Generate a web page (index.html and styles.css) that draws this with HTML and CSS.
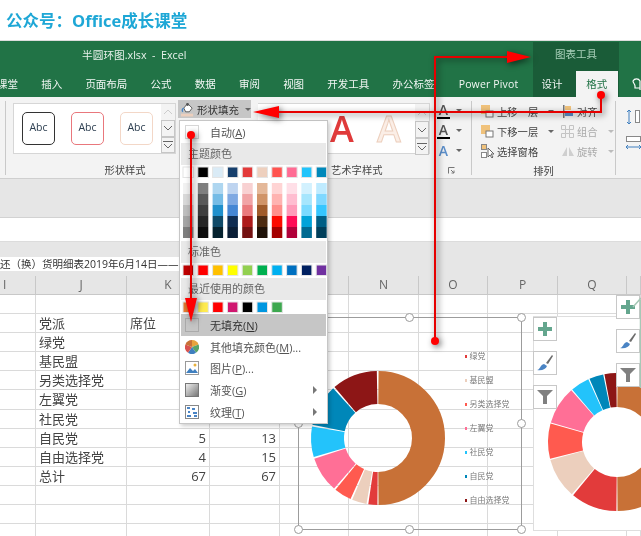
FILE: index.html
```html
<!DOCTYPE html>
<html lang="zh">
<head>
<meta charset="utf-8">
<title>半圆环图.xlsx - Excel</title>
<link rel="stylesheet" href="styles.css">
</head>
<body>
<div class="page">
  <header class="brand">公众号：Office成长课堂</header>

  <section class="green">
    <div class="chart-tools">图表工具</div>
    <div class="doc-title">半圆环图.xlsx&nbsp; -&nbsp; Excel</div>
    <nav class="tabs">
      <span class="tab first">课堂</span><span class="tab">插入</span><span class="tab">页面布局</span><span class="tab">公式</span><span class="tab">数据</span><span class="tab">审阅</span><span class="tab">视图</span><span class="tab">开发工具</span><span class="tab">办公标签</span><span class="tab pivot">Power Pivot</span><span class="tab">设计</span><span class="tab active">格式</span>
      <svg class="bulb" width="9" height="16" viewBox="0 0 9 16"><path d="M8 14V5a4 4 0 0 0-7 0c0 2 2 3 2 5v2h5" fill="none" stroke="#fff" stroke-width="1.2"/></svg>
    </nav>
  </section>

  <section class="ribbon">
    <div class="group g-style">
      <div class="gallery">
        <div class="abc-list">
          <span class="abc a1">Abc</span><span class="abc a2">Abc</span><span class="abc a3">Abc</span>
        </div>
        <div class="scroll">
          <span class="sc faded"><svg width="10" height="6" viewBox="0 0 10 6"><path d="M1 5l4-4 4 4" fill="none" stroke="#ccc"/></svg></span>
          <span class="sc boxed"><svg width="10" height="6" viewBox="0 0 10 6"><path d="M1 1l4 4 4-4" fill="none" stroke="#666"/></svg></span>
          <span class="sc boxed"><svg width="10" height="8" viewBox="0 0 10 8"><path d="M0 .5h10M1 3l4 4 4-4" fill="none" stroke="#666"/></svg></span>
        </div>
      </div>
      <div class="group-label">形状样式</div>
    </div>

    <div class="g-word">
      <div class="fill-btn">
        <svg width="14" height="17" viewBox="0 0 14 17"><rect x="0" y="13" width="13" height="3" fill="#eccfbd"/><path d="M3 7l4-5 5 5-3 4H5z" fill="#fff" stroke="#555"/><path d="M3 7c-2 1-2 3-1 4" fill="none" stroke="#4a84c4" stroke-width="1.5"/><circle cx="7" cy="3" r="1.6" fill="#555"/></svg>
        <span>形状填充</span>
        <i class="caret"></i>
      </div>
      <div class="word-main">
        <div class="word-gallery">
          <span class="big-a red">A</span><span class="big-a peach">A</span>
          <div class="scroll">
            <span class="sc faded"><svg width="10" height="6" viewBox="0 0 10 6"><path d="M1 5l4-4 4 4" fill="none" stroke="#ccc"/></svg></span>
            <span class="sc boxed"><svg width="10" height="6" viewBox="0 0 10 6"><path d="M1 1l4 4 4-4" fill="none" stroke="#666"/></svg></span>
            <span class="sc boxed"><svg width="10" height="8" viewBox="0 0 10 8"><path d="M0 .5h10M1 3l4 4 4-4" fill="none" stroke="#666"/></svg></span>
          </div>
        </div>
        <div class="word-label"><span>艺术字样式</span>
          <svg width="7" height="7" viewBox="0 0 7 7"><path d="M.5 6.5v-6h6M3 3l3 3M6 3.500V6H3.500" fill="none" stroke="#777"/></svg>
        </div>
      </div>
      <div class="text-tools">
        <div class="tt"><span class="small-a under">A</span><i class="caret"></i></div>
        <div class="tt"><span class="small-a under">A</span><i class="caret"></i></div>
        <div class="tt"><span class="small-a blue">A</span><i class="caret"></i></div>
      </div>
    </div>

    <div class="group g-arrange">
      <div class="arrange-grid">
        <div class="ar"><svg width="13" height="13" viewBox="0 0 13 13"><rect x="0" y="0" width="9" height="9" fill="#f0c27b"/><rect x="5" y="6" width="7" height="6" fill="#fff" stroke="#777"/></svg><span>上移一层</span><i class="caret"></i></div>
        <div class="ar"><svg width="13" height="13" viewBox="0 0 13 13"><rect x="2" y="0" width="1.500" height="13" fill="#777"/><rect x="4" y="1" width="6" height="4" fill="#f0c27b"/><rect x="4" y="7" width="8" height="4" fill="#5b8ec9"/></svg><span>对齐</span></div>
        <div class="ar"><svg width="13" height="13" viewBox="0 0 13 13"><rect x="0" y="0" width="9" height="9" fill="#f0c27b"/><rect x="5" y="6" width="7" height="6" fill="#fff" stroke="#777"/></svg><span>下移一层</span><i class="caret"></i></div>
        <div class="ar off"><svg width="13" height="13" viewBox="0 0 13 13"><path d="M.5.500h4v4h-4zM8.500.500h4v4h-4zM.5 8.500h4v4h-4zM8.500 8.500h4v4h-4zM4.500 4.500h4v4h-4z" fill="none" stroke="#c4c4c4"/></svg><span>组合</span><i class="caret"></i></div>
        <div class="ar"><svg width="13" height="14" viewBox="0 0 13 14"><rect x=".5" y=".5" width="5" height="5" fill="#f0c27b" stroke="#888"/><rect x=".5" y="8.500" width="5" height="5" fill="#fff" stroke="#888"/><path d="M7 4v9l2-2 2 3 1-1-2-3h3z" fill="#fff" stroke="#666"/></svg><span>选择窗格</span></div>
        <div class="ar off"><svg width="13" height="13" viewBox="0 0 13 13"><path d="M6 2L1 11h5zM8 2l5 9H8z" fill="#cfcfcf"/></svg><span>旋转</span><i class="caret"></i></div>
      </div>
      <div class="group-label">排列</div>
    </div>

    <div class="g-size">
      <svg width="15" height="14" viewBox="0 0 15 14"><path d="M3 0v14M1 2l2-2 2 2M1 12l2 2 2-2" fill="none" stroke="#3f7fbf"/><rect x="9.500" y=".5" width="4" height="12" fill="#fff" stroke="#888"/></svg>
      <svg width="15" height="14" viewBox="0 0 15 14"><rect x=".5" y=".5" width="14" height="5" fill="#fff" stroke="#888"/><path d="M0 11h15M2 9l-2 2 2 2M13 9l2 2-2 2" fill="none" stroke="#3f7fbf"/></svg>
    </div>
  </section>

  <div class="band"></div>
  <div class="formula"></div>
  <div class="sheet-tabs"><div class="sheet-title">还（换）货明细表2019年6月14日——</div></div>

  <section class="sheet">
    <div class="row head"><span class="left">I</span><span>J</span><span>K</span><span></span><span></span><span>N</span><span>O</span><span>P</span><span>Q</span><span></span></div>
    <div class="row"><span></span><span></span><span></span><span></span><span></span><span></span><span></span><span></span><span></span><span></span></div>
    <div class="row"><span></span><span>党派</span><span>席位</span><span></span><span></span><span></span><span></span><span></span><span></span><span></span></div>
    <div class="row"><span></span><span>绿党</span><span></span><span></span><span></span><span></span><span></span><span></span><span></span><span></span></div>
    <div class="row"><span></span><span>基民盟</span><span></span><span></span><span></span><span></span><span></span><span></span><span></span><span></span></div>
    <div class="row"><span></span><span>另类选择党</span><span></span><span></span><span></span><span></span><span></span><span></span><span></span><span></span></div>
    <div class="row"><span></span><span>左翼党</span><span></span><span></span><span></span><span></span><span></span><span></span><span></span><span></span></div>
    <div class="row"><span></span><span>社民党</span><span></span><span></span><span></span><span></span><span></span><span></span><span></span><span></span></div>
    <div class="row"><span></span><span>自民党</span><span class="num">5</span><span class="num">13</span><span></span><span></span><span></span><span></span><span></span><span></span></div>
    <div class="row"><span></span><span>自由选择党</span><span class="num">4</span><span class="num">15</span><span></span><span></span><span></span><span></span><span></span><span></span></div>
    <div class="row"><span></span><span>总计</span><span class="num">67</span><span class="num">67</span><span></span><span></span><span></span><span></span><span></span><span></span></div>
    <div class="row"><span></span><span></span><span></span><span></span><span></span><span></span><span></span><span></span><span></span><span></span></div>
    <div class="row"><span></span><span></span><span></span><span></span><span></span><span></span><span></span><span></span><span></span><span></span></div>
    <div class="row"><span></span><span></span><span></span><span></span><span></span><span></span><span></span><span></span><span></span><span></span></div>
  </section>

  <!-- first chart: transparent, selected -->
  <div class="chart-one">
    <svg class="donut-one" width="140" height="140" viewBox="-70 -70 140 140">
      <g fill="none" stroke-width="33">
        <circle r="50.500" pathLength="360" stroke="#c87137" stroke-dasharray="179 181" transform="rotate(-89.500)"/>
        <circle r="50.500" pathLength="360" stroke="#e23b3b" stroke-dasharray="7.900 352.100" transform="rotate(90.500)"/>
        <circle r="50.500" pathLength="360" stroke="#eccfbd" stroke-dasharray="12.800 347.200" transform="rotate(99.900)"/>
        <circle r="50.500" pathLength="360" stroke="#ff5a4f" stroke-dasharray="15.300 344.700" transform="rotate(114.200)"/>
        <circle r="50.500" pathLength="360" stroke="#ff6f96" stroke-dasharray="31 329" transform="rotate(131)"/>
        <circle r="50.500" pathLength="360" stroke="#23c3fb" stroke-dasharray="26.500 333.500" transform="rotate(163.500)"/>
        <circle r="50.500" pathLength="360" stroke="#0087b9" stroke-dasharray="36.500 323.500" transform="rotate(191.500)"/>
        <circle r="50.500" pathLength="360" stroke="#8d1616" stroke-dasharray="39.500 320.500" transform="rotate(229.500)"/>
      </g>
    </svg>
    <ul class="legend">
      <li class="l1">绿党</li><li class="l2">基民盟</li><li class="l3">另类选择党</li><li class="l4">左翼党</li><li class="l5">社民党</li><li class="l6">自民党</li><li class="l7">自由选择党</li>
    </ul>
    <i class="handle tl"></i><i class="handle tm"></i><i class="handle tr"></i>
    <i class="handle ml"></i><i class="handle mr"></i>
    <i class="handle bl"></i><i class="handle bm"></i><i class="handle br"></i>
  </div>

  <!-- second chart -->
  <div class="chart-two">
    <svg class="donut-two" width="144" height="144" viewBox="-72 -72 144 144">
      <g fill="none" stroke-width="34">
        <circle r="52" pathLength="360" stroke="#c87137" stroke-dasharray="179 181" transform="rotate(-89.500)"/>
        <circle r="52" pathLength="360" stroke="#e23b3b" stroke-dasharray="39 321" transform="rotate(90.500)"/>
        <circle r="52" pathLength="360" stroke="#eccfbd" stroke-dasharray="34 326" transform="rotate(130.900)"/>
        <circle r="52" pathLength="360" stroke="#ff5a4f" stroke-dasharray="29.500 330.500" transform="rotate(166)"/>
        <circle r="52" pathLength="360" stroke="#ff6f96" stroke-dasharray="32 328" transform="rotate(196.500)"/>
        <circle r="52" pathLength="360" stroke="#23c3fb" stroke-dasharray="16 344" transform="rotate(229.500)"/>
        <circle r="52" pathLength="360" stroke="#0087b9" stroke-dasharray="12 348" transform="rotate(246.500)"/>
        <circle r="52" pathLength="360" stroke="#8d1616" stroke-dasharray="10 350" transform="rotate(259.500)"/>
      </g>
    </svg>
  </div>

  <div class="chart-tools-a">
    <button class="cbtn"><svg width="14" height="14" viewBox="0 0 14 14"><path d="M5 0h4v5h5v4H9v5H5V9H0V5h5z" fill="#64a68e"/></svg></button>
    <button class="cbtn"><svg width="18" height="18" viewBox="0 0 18 18"><path d="M10 9l6-8 1 1-5 8z" fill="#6b6b6b"/><path d="M1 16c3 0 3-5 7-6l3 2c-1 3-5 5-10 4z" fill="#4a84c4"/></svg></button>
    <button class="cbtn"><svg width="16" height="14" viewBox="0 0 16 14"><path d="M0 0h16l-6 6v8H6V6z" fill="#808080"/></svg></button>
  </div>
  <div class="chart-tools-b">
    <button class="cbtn"><svg width="14" height="14" viewBox="0 0 14 14"><path d="M5 0h4v5h5v4H9v5H5V9H0V5h5z" fill="#64a68e"/></svg></button>
    <button class="cbtn"><svg width="18" height="18" viewBox="0 0 18 18"><path d="M10 9l6-8 1 1-5 8z" fill="#6b6b6b"/><path d="M1 16c3 0 3-5 7-6l3 2c-1 3-5 5-10 4z" fill="#4a84c4"/></svg></button>
    <button class="cbtn"><svg width="16" height="14" viewBox="0 0 16 14"><path d="M0 0h16l-6 6v8H6V6z" fill="#808080"/></svg></button>
  </div>

  <!-- dropdown menu -->
  <div class="menu">
    <div class="item"><i class="box"></i><span>自动(<u>A</u>)</span></div>
    <div class="menu-head">主题颜色</div>
    <svg class="pal theme" width="147" height="76" viewBox="0 0 147 76">
      <g class="top">
        <rect x="2" fill="#ffffff"/><rect x="16.800" fill="#000000"/><rect x="31.600" fill="#daebf6"/><rect x="46.400" fill="#17406d"/><rect x="61.200" fill="#e33a3a"/><rect x="76" fill="#eed0be"/><rect x="90.800" fill="#ff5450"/><rect x="105.600" fill="#ff6c94"/><rect x="120.400" fill="#22c4fb"/><rect x="135.200" fill="#0088ba"/>
      </g>
      <g class="col" transform="translate(2 18)"><rect y="0" fill="#f2f2f2"/><rect y="11" fill="#d9d9d9"/><rect y="22" fill="#bfbfbf"/><rect y="33" fill="#a6a6a6"/><rect y="44" fill="#7f7f7f"/></g>
      <g class="col" transform="translate(16.800 18)"><rect y="0" fill="#7f7f7f"/><rect y="11" fill="#595959"/><rect y="22" fill="#3f3f3f"/><rect y="33" fill="#262626"/><rect y="44" fill="#0d0d0d"/></g>
      <g class="col" transform="translate(31.600 18)"><rect y="0" fill="#aed6f0"/><rect y="11" fill="#75bce6"/><rect y="22" fill="#2090cc"/><rect y="33" fill="#104a68"/><rect y="44" fill="#06222f"/></g>
      <g class="col" transform="translate(46.400 18)"><rect y="0" fill="#bed4f0"/><rect y="11" fill="#7fa9e2"/><rect y="22" fill="#4587d4"/><rect y="33" fill="#0f2d52"/><rect y="44" fill="#0a1e36"/></g>
      <g class="col" transform="translate(61.200 18)"><rect y="0" fill="#f8d1d2"/><rect y="11" fill="#f1a4a6"/><rect y="22" fill="#ea7a7d"/><rect y="33" fill="#ae1b1b"/><rect y="44" fill="#741212"/></g>
      <g class="col" transform="translate(76 18)"><rect y="0" fill="#e4b899"/><rect y="11" fill="#d09468"/><rect y="22" fill="#a05c2b"/><rect y="33" fill="#4d2c12"/><rect y="44" fill="#1f1208"/></g>
      <g class="col" transform="translate(90.800 18)"><rect y="0" fill="#ffd4d4"/><rect y="11" fill="#ffb3b1"/><rect y="22" fill="#ff8f8b"/><rect y="33" fill="#fc0a00"/><rect y="44" fill="#a50000"/></g>
      <g class="col" transform="translate(105.600 18)"><rect y="0" fill="#ffdfe7"/><rect y="11" fill="#ffbdd0"/><rect y="22" fill="#ff9bb9"/><rect y="33" fill="#ff0b55"/><rect y="44" fill="#b1003a"/></g>
      <g class="col" transform="translate(120.400 18)"><rect y="0" fill="#d2f1fe"/><rect y="11" fill="#a6e6fd"/><rect y="22" fill="#7adaff"/><rect y="33" fill="#00a3d9"/><rect y="44" fill="#006b92"/></g>
      <g class="col" transform="translate(135.200 18)"><rect y="0" fill="#bfebff"/><rect y="11" fill="#7fd8ff"/><rect y="22" fill="#35c6fe"/><rect y="33" fill="#005f85"/><rect y="44" fill="#003f5a"/></g>
    </svg>
    <div class="menu-head">标准色</div>
    <svg class="pal" width="147" height="15" viewBox="0 0 147 15">
      <g class="std">
        <rect x="2" fill="#c00000"/><rect x="16.800" fill="#ff0000"/><rect x="31.600" fill="#ffc000"/><rect x="46.400" fill="#ffff00"/><rect x="61.200" fill="#92d050"/><rect x="76" fill="#00b050"/><rect x="90.800" fill="#00b0f0"/><rect x="105.600" fill="#0070c0"/><rect x="120.400" fill="#002060"/><rect x="135.200" fill="#7030a0"/>
      </g>
    </svg>
    <div class="menu-head">最近使用的颜色</div>
    <svg class="pal" width="147" height="14" viewBox="0 0 147 14">
      <g class="std">
        <rect x="2" fill="#ed7d31"/><rect x="16.800" fill="#ffeb50"/><rect x="31.600" fill="#ff0000"/><rect x="46.400" fill="#d01870"/><rect x="61.200" fill="#000000"/><rect x="76" fill="#0097e0"/><rect x="90.800" fill="#3da84f"/>
      </g>
    </svg>
    <div class="item hover"><i class="box"></i><span>无填充(<u>N</u>)</span></div>
    <div class="item"><svg class="ico" width="14" height="14" viewBox="0 0 14 14"><path d="M7 7L7 0a7 7 0 0 1 6.600 4.600z" fill="#e8a33d"/><path d="M7 7l6.600-2.400A7 7 0 0 1 11 12.800z" fill="#5aa469"/><path d="M7 7l4 5.800a7 7 0 0 1-8 0z" fill="#3f7fbf"/><path d="M7 7l-4 5.800A7 7 0 0 1 .4 4.600z" fill="#d9534f"/><path d="M7 7L.4 4.600A7 7 0 0 1 7 0z" fill="#c87137"/></svg><span>其他填充颜色(<u>M</u>)...</span></div>
    <div class="item"><svg class="ico" width="14" height="14" viewBox="0 0 14 14"><rect x=".5" y=".5" width="13" height="13" fill="#fff" stroke="#999"/><path d="M1 12l4-5 3 3 2-2 3 4z" fill="#3f7fbf"/><circle cx="10" cy="4" r="1.500" fill="#e8b13d"/></svg><span>图片(<u>P</u>)...</span></div>
    <div class="item"><i class="box grad"></i><span>渐变(<u>G</u>)</span><b class="arrow"></b></div>
    <div class="item"><svg class="ico" width="14" height="14" viewBox="0 0 14 14"><rect x=".5" y=".5" width="13" height="13" fill="#fff" stroke="#888"/><path d="M2 2h3v2H2zM7 3h3v2H7zM3 6h2v2H3zM8 7h4v2H8zM2 10h4v2H2zM9 10h3v2H9z" fill="#4a84c4"/></svg><span>纹理(<u>T</u>)</span><b class="arrow"></b></div>
  </div>

  <!-- red annotation arrows -->
  <svg class="marks" width="641" height="536" viewBox="0 0 641 536">
    <path d="M640.500 300v88M633 307l8-9" fill="none" stroke="#a6c8b6" stroke-width="1.500"/>
    <g class="red-mark" fill="#ff0000" stroke="none">
      <path d="M601 95V112H275" fill="none" stroke="#e60000" stroke-width="2"/>
      <circle cx="601" cy="95" r="4"/>
      <path d="M253 112l26-6v12z"/>
      <path d="M435 341V57H510" fill="none" stroke="#e60000" stroke-width="2"/>
      <circle cx="435" cy="341" r="4"/>
      <path d="M531 57l-24-6v12z"/>
      <path d="M191 135V305" fill="none" stroke="#e60000" stroke-width="2"/>
      <circle cx="191" cy="135" r="4"/>
      <path d="M191 322l-6-24h12z"/>
    </g>
  </svg>
</div>
</body>
</html>
```
FILE: styles.css
```css
* { box-sizing: border-box; }
html, body { margin: 0; padding: 0; background: #fff; }
body { font-family: "Open Sans", "Noto Sans CJK SC", sans-serif; color: #444; }
.page { position: relative; width: 641px; height: 536px; overflow: hidden; background: #fff; filter: blur(.45px); }

.brand { height: 41px; padding-left: 6px; line-height: 42px; font-size: 16.500px; font-weight: 700; color: #1ea7d6; border-bottom: 1px solid #ddd; white-space: nowrap; }

.green { position: relative; height: 56px; background: #217346; color: #fff; font-size: 10.500px; }
.chart-tools { position: absolute; left: 533px; top: 1px; bottom: 0; width: 86px; background: #1a5c38; color: #a9d0ba; text-align: center; padding-top: 4px; line-height: 16px; }
.doc-title { position: relative; height: 30px; padding-left: 82px; line-height: 28px; font-size: 10.700px; color: #e8f2ec; white-space: nowrap; }
.tabs { position: relative; display: flex; align-items: center; gap: 23.200px; height: 26px; white-space: nowrap; }
.tab { display: block; line-height: 26px; color: #f2f7f4; }
.tab.first { margin-left: -3px; }
.tab.pivot { margin-left: 1px; letter-spacing: .15px; }
.tab.active { background: #f3f3f3; color: #217346; padding: 0 10.500px; margin-left: -10px; }
.bulb { margin-left: -9px; }

.ribbon { display: flex; height: 82px; background: #f3f3f3; border-bottom: 1px solid #cfcfcf; font-size: 10.300px; color: #444; }
.group-label { text-align: center; line-height: 14px; }
.g-style { width: 173px; margin: 4px 0 3px 5px; padding: 2px 0 0 7px; border-left: 1px solid #c9c9c9; }
.gallery { display: flex; width: 163px; height: 51px; background: #fff; border: 1px solid #d6d6d6; }
.g-style .group-label { margin-top: 9px; padding-left: 59px; }
.abc-list { display: flex; gap: 16px; padding: 8px 0 0 8px; width: 147px; }
.abc { display: block; width: 33px; height: 33px; border-radius: 5px; background: #fff; text-align: center; line-height: 29px; font-size: 10.500px; color: #2c3e50; border: 1.500px solid; }
.a1 { border-color: #333; }
.a2 { border-color: #e9777c; }
.a3 { border-color: #f3d7c7; }
.scroll { display: flex; flex-direction: column; width: 14px; flex: none; background: #f3f3f3; }
.sc { display: flex; align-items: center; justify-content: center; height: 17px; }
.sc.boxed { border: 1px solid #c6c6c6; background: #f3f3f3; }

.g-word { display: flex; width: 293px; position: relative; }
.fill-btn { display: flex; align-items: center; gap: 3px; width: 73px; height: 18px; margin-top: 3px; margin-left: 0; padding-left: 3px; background: #c6c6c6; font-size: 10.500px; color: #333; white-space: nowrap; }
.caret { display: block; width: 0; height: 0; border: 3px solid transparent; border-top-color: #666; border-bottom: 0; flex: none; }
.fill-btn .caret { margin-left: 3px; }
.word-main { width: 172px; margin-left: 7px; padding-top: 6px; flex: none; }
.word-gallery { position: relative; display: flex; align-items: flex-start; justify-content: flex-end; height: 51px; background: #fff; border: 1px solid #d6d6d6; border-left: 0; }
.big-a { position: absolute; top: 0; font-size: 36px; line-height: 50px; font-weight: 600; }
.big-a.red { left: 72px; color: #e03a3a; }
.big-a.peach { left: 119px; color: #fbeee6; -webkit-text-stroke: 1px #eccfbd; }
.word-label { display: flex; justify-content: space-between; align-items: center; padding: 9px 0 0 73px; margin-right: -31px; line-height: 14px; }
.word-label svg { margin-right: 6px; }
.text-tools { display: flex; flex-direction: column; gap: 0; margin-left: 7px; padding-top: 3px; width: 26px; }
.tt { display: flex; align-items: center; gap: 6px; height: 20px; }
.small-a { display: block; width: 13px; text-align: center; font-size: 14px; line-height: 15px; color: #555; font-weight: 600; }
.small-a.under { border-bottom: 2px solid #000; height: 17px; }
.small-a.blue { color: #5b8ec9; }

.g-arrange { width: 145px; margin: 4px 0 3px; border-left: 1px solid #c9c9c9; border-right: 1px solid #c9c9c9; }
.arrange-grid { display: grid; grid-template-columns: 80px 1fr; grid-auto-rows: 20px; padding: 0 0 0 9px; height: 62px; }
.ar { display: flex; align-items: center; gap: 3px; white-space: nowrap; color: #444; }
.ar .caret { margin-left: 7px; }
.ar.off { color: #aaa; }
.ar.off .caret { border-top-color: #bbb; }
.g-arrange .group-label { margin-top: 1px; }
.g-size { display: flex; flex-direction: column; gap: 12px; padding: 13px 0 0 10px; }

.band { height: 39px; background: #e6e6e6; border-bottom: 1px solid #d2d2d2; }
.formula { height: 24px; background: #fff; border-bottom: 1px solid #dcdcdc; }
.sheet-tabs { height: 34px; background: #e6e6e6; padding-top: 15px; }
.sheet-title { width: 300px; height: 14px; background: #fff; padding-left: 0; font-size: 10.500px; line-height: 15px; color: #333; white-space: nowrap; overflow: hidden; }

.row { display: grid; grid-template-columns: 36px 91px 83px 70px 69px 70px 69px 70px 69px 14px; height: 19.100px; font-size: 13px; line-height: 18px; color: #444; }
.row > span { display: block; border-right: 1.500px solid #dadada; border-bottom: 1.500px solid #dadada; padding: 0 3px; white-space: nowrap; }
.row .num { text-align: right; }
.row.head { background: #e6e6e6; font-size: 12px; color: #666; height: 19px; }
.row.head > span { text-align: center; border-right-color: #c8c8c8; border-bottom-color: #c8c8c8; }
.row.head .left { text-align: left; }

.chart-one { position: absolute; left: 298px; top: 317px; width: 224px; height: 213px; border: 1.500px solid #9c9c9c; }
.donut-one { position: absolute; left: 9px; top: 50px; }
.legend { list-style: none; margin: 0; padding: 0; position: absolute; left: 166px; top: 32px; display: flex; flex-direction: column; gap: 12px; font-size: 8px; line-height: 12px; color: #7a7a7a; white-space: nowrap; }
.legend li { display: flex; align-items: center; gap: 2.500px; }
.legend li::before { content: ""; width: 2px; height: 3px; flex: none; }
.l1::before { background: #e23b3b; }
.l2::before { background: #eccfbd; }
.l3::before { background: #ff5a4f; }
.l4::before { background: #ff6f96; }
.l5::before { background: #23c3fb; }
.l6::before { background: #0087b9; }
.l7::before { background: #8d1616; }
.handle { position: absolute; width: 9px; height: 9px; border-radius: 50%; background: #fff; border: 1.500px solid #9c9c9c; }
.tl, .tm, .tr { top: -5px; }
.bl, .bm, .br { bottom: -5px; }
.ml, .mr { top: 101px; }
.tl, .ml, .bl { left: -5px; }
.tm, .bm { left: 106px; }
.tr, .mr, .br { right: -5px; }

.chart-two { position: absolute; left: 533px; top: 316px; width: 130px; height: 215px; background: #fff; border: 1px solid #dedede; }
.donut-two { position: absolute; left: 11px; top: 53px; }
.chart-tools-a, .chart-tools-b { position: absolute; display: flex; flex-direction: column; gap: 10px; }
.chart-tools-a { left: 533px; top: 317px; }
.chart-tools-b { left: 616px; top: 295px; }
.cbtn { display: flex; align-items: center; justify-content: center; width: 24px; height: 24px; padding: 0; background: #fff; border: 1px solid #c8c8c8; }

.menu { position: absolute; left: 179px; top: 120px; width: 149px; height: 304px; padding: 0 1px; background: #fff; border: 1px solid #c6c6c6; box-shadow: 2px 2px 4px rgba(0,0,0,.2); font-size: 11px; color: #555; }
.item { display: flex; align-items: center; position: relative; height: 21.700px; padding-left: 4px; white-space: nowrap; }
.item > span { margin-left: 11px; }
.item.hover { background: #c6c6c6; color: #333; height: 22px; }
.box { display: block; width: 14px; height: 14px; border: 1px solid #d6d6d6; flex: none; }
.hover .box { border-color: #aaa; }
.box.grad { border-color: #777; background: linear-gradient(135deg, #eee, #777); }
.ico { flex: none; }
.arrow { position: absolute; right: 9px; top: 7px; width: 0; height: 0; border: 4px solid transparent; border-left-color: #777; border-right: 0; }
.menu-head { height: 22px; line-height: 22px; padding-left: 7px; background: #e9e9e9; color: #666; }
.pal { display: block; }
.top rect, .std rect { width: 10.500px; height: 10.500px; stroke: #e4e4e4; stroke-width: 1; }
.top rect { y: 2px; }
.std rect { y: 2px; }
.col rect { width: 10.500px; height: 11px; }

.marks { position: absolute; left: 0; top: 0; pointer-events: none; }
.red-mark { filter: drop-shadow(2px 2px 3px rgba(0,0,0,.6)); }
```
